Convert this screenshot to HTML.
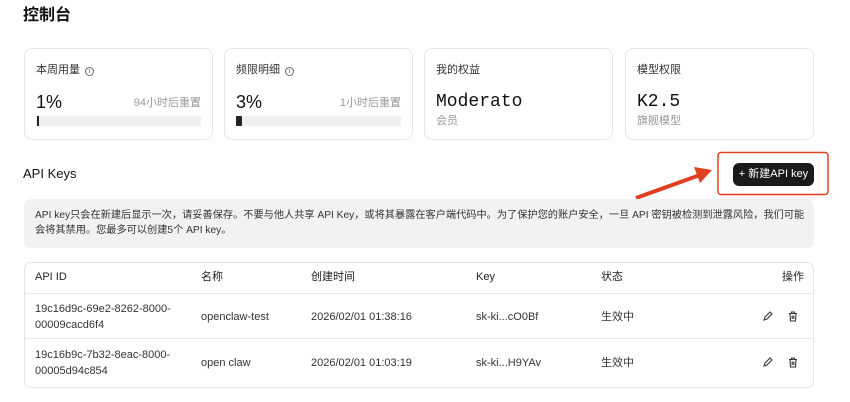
<!DOCTYPE html>
<html><head><meta charset="utf-8"><style>
*{box-sizing:border-box;margin:0;padding:0}
body{width:850px;height:402px;background:#fff;font-family:"Liberation Sans","Noto Sans CJK SC",sans-serif;color:#222;position:relative;overflow:hidden;line-height:14px}
.a{position:absolute;white-space:nowrap;line-height:14px}
.card{position:absolute;top:48px;height:92px;width:189px;border:1px solid #e6e6e6;border-radius:8px}
.lbl{position:absolute;left:11px;top:14px;font-size:11px;color:#333;line-height:14px}
.val{position:absolute;left:11px;top:42px;font-size:18px;color:#111;line-height:22px}
.mono{font-family:"Liberation Mono","DejaVu Sans Mono",monospace}
.sub{position:absolute;top:65px;left:11px;font-size:11px;color:#999;line-height:14px}
.bar{position:absolute;left:11px;top:67px;width:165px;height:10px;background:#f0f0f0}
.info{display:inline-block;width:9px;height:9px;border:1px solid #666;border-radius:50%;margin-left:5px;vertical-align:0px;font-size:7px;line-height:7px;text-align:center;color:#666}
.th{font-size:11px;color:#222}
.td{font-size:11px;color:#333}
</style></head><body>
<div class="a" style="left:23px;top:6px;font-size:16px;line-height:20px;font-weight:bold;color:#111">控制台</div>

<div class="card" style="left:24px">
<div class="lbl">本周用量<span class="info">i</span></div>
<div class="val">1%</div>
<div class="a" style="right:11px;top:47px;font-size:11px;color:#999">94小时后重置</div>
<div class="bar"><div style="position:absolute;left:1px;top:0;width:2px;height:10px;background:#222"></div></div>
</div>
<div class="card" style="left:224px">
<div class="lbl">频限明细<span class="info">i</span></div>
<div class="val">3%</div>
<div class="a" style="right:11px;top:47px;font-size:11px;color:#999">1小时后重置</div>
<div class="bar"><div style="position:absolute;left:0;top:0;width:6px;height:10px;background:#222;border-radius:1px"></div></div>
</div>
<div class="card" style="left:424px">
<div class="lbl">我的权益</div>
<div class="val mono">Moderato</div>
<div class="sub">会员</div>
</div>
<div class="card" style="left:625px">
<div class="lbl">模型权限</div>
<div class="val mono">K2.5</div>
<div class="sub">旗舰模型</div>
</div>

<div class="a" style="left:23px;top:166px;font-size:13px;line-height:16px;color:#111">API Keys</div>

<svg class="a" style="left:0;top:0" width="850" height="402">
<line x1="636" y1="198" x2="700" y2="175" stroke="#e0401f" stroke-width="4"/>
<polygon points="712,170 694,167 700,183" fill="#e0401f"/>
<rect x="718" y="152.5" width="110" height="42" rx="3" fill="none" stroke="#e0401f" stroke-width="1.5"/>
</svg>
<div class="a" style="left:733px;top:163px;width:81px;height:23px;background:#1a1a1a;border-radius:6px;color:#fff;font-size:11px;line-height:23px;text-align:center">+ 新建API key</div>

<div class="a" style="left:24px;top:199px;width:790px;height:49px;background:#f2f2f2;border-radius:7px"></div>
<div class="a" style="left:35px;top:208px;font-size:10.2px;line-height:15px;color:#333;white-space:normal;width:776px">API key只会在新建后显示一次，请妥善保存。不要与他人共享 API Key，或将其暴露在客户端代码中。为了保护您的账户安全，一旦 API 密钥被检测到泄露风险，我们可能会将其禁用。您最多可以创建5个 API key。</div>

<div class="a" style="left:24px;top:262px;width:790px;height:126px;border:1px solid #e6e6e6;border-radius:7px"></div>
<div class="a" style="left:25px;top:293px;width:788px;height:1px;background:#e8e8e8"></div>
<div class="a" style="left:25px;top:338px;width:788px;height:1px;background:#e8e8e8"></div>

<div class="a th" style="left:35px;top:270px">API ID</div>
<div class="a th" style="left:201px;top:270px">名称</div>
<div class="a th" style="left:311px;top:270px">创建时间</div>
<div class="a th" style="left:476px;top:270px">Key</div>
<div class="a th" style="left:601px;top:270px">状态</div>
<div class="a th" style="left:782px;top:270px">操作</div>

<div class="a td" style="left:35px;top:301px;line-height:16px">19c16d9c-69e2-8262-8000-<br>00009cacd6f4</div>
<div class="a td" style="left:201px;top:310px">openclaw-test</div>
<div class="a td" style="left:311px;top:310px">2026/02/01 01:38:16</div>
<div class="a td" style="left:476px;top:310px">sk-ki...cO0Bf</div>
<div class="a td" style="left:601px;top:310px">生效中</div>

<div class="a td" style="left:35px;top:347px;line-height:16px">19c16b9c-7b32-8eac-8000-<br>00005d94c854</div>
<div class="a td" style="left:201px;top:356px">open claw</div>
<div class="a td" style="left:311px;top:356px">2026/02/01 01:03:19</div>
<div class="a td" style="left:476px;top:356px">sk-ki...H9YAv</div>
<div class="a td" style="left:601px;top:356px">生效中</div>

<svg class="a" style="left:0;top:0" width="850" height="402" fill="none" stroke="#333" stroke-width="1.1">
<g transform="translate(762,311)"><path d="M2 9 L3 6 L8 1 L10 3 L5 8 Z"/></g>
<g transform="translate(788,311)"><path d="M1 2.5 H9 M3.5 2.5 V1 H6.5 V2.5 M2 2.5 L2.5 10 H7.5 L8 2.5 M4.2 4.5 V8 M5.8 4.5 V8"/></g>
<g transform="translate(762,357)"><path d="M2 9 L3 6 L8 1 L10 3 L5 8 Z"/></g>
<g transform="translate(788,357)"><path d="M1 2.5 H9 M3.5 2.5 V1 H6.5 V2.5 M2 2.5 L2.5 10 H7.5 L8 2.5 M4.2 4.5 V8 M5.8 4.5 V8"/></g>
</svg>
</body></html>
